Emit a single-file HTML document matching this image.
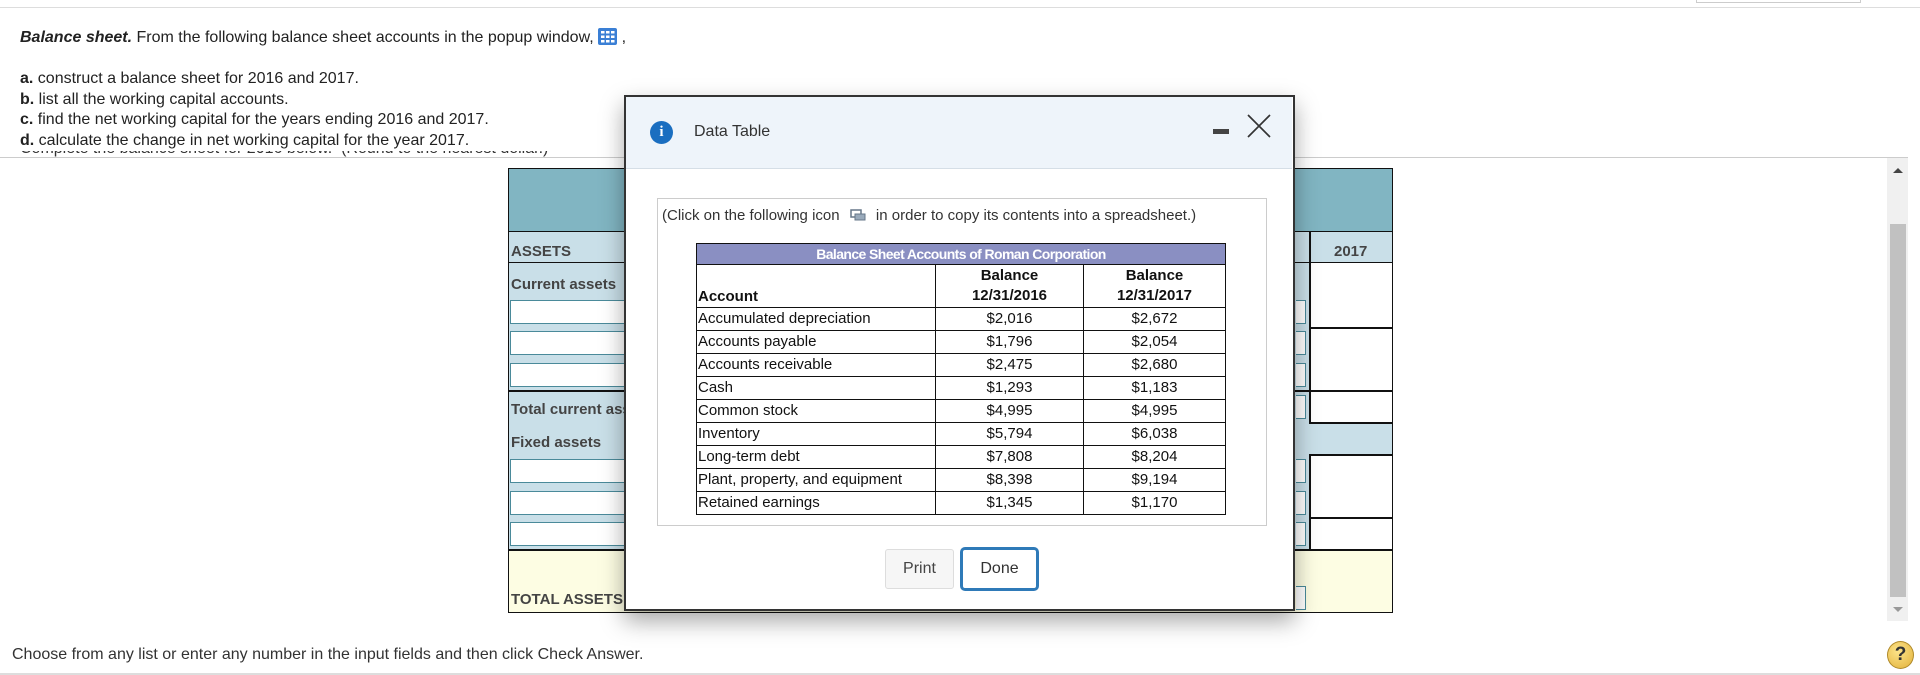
<!DOCTYPE html>
<html><head><meta charset="utf-8"><style>
*{box-sizing:border-box;margin:0;padding:0}
body{width:1920px;height:675px;position:relative;overflow:hidden;background:#fff;font-family:"Liberation Sans",Arial,sans-serif;color:#222}
.a{position:absolute}
.q{font-size:16px;line-height:20.5px;white-space:nowrap}
.lbl{font-weight:bold;color:#444;font-size:15px}
.inp{position:absolute;left:510px;width:130px;height:24px;border:1.5px solid #4a8a9a;background:#fff}
.rin{position:absolute;left:1296px;width:10px;height:24px;border:1.5px solid #4a8a9a;border-left:none;background:#fff}
.dt{border-collapse:collapse;font-size:15px;color:#111}
.dt td{border:1.5px solid #111;height:23px;padding:0 1px;line-height:20px}
.dt td.n{text-align:center}
</style></head><body>
<div class="a" style="left:0;top:7px;width:1920px;height:1px;background:#ddd"></div>
<div class="a" style="left:1696px;top:0;width:165px;height:3px;border:1px solid #ccc;border-top:none"></div>

<div class="a q" style="left:20px;top:28px"><b><i>Balance sheet.</i></b> From the following balance sheet accounts in the popup window,
<span style="display:inline-block;width:19px;height:17px;background:#3a7fd5;border-radius:2px;vertical-align:-3px;position:relative">
<svg width="19" height="17" style="position:absolute;left:0;top:0"><g fill="#fff"><rect x="3" y="3" width="3.5" height="2.5"/><rect x="8" y="3" width="3.5" height="2.5"/><rect x="13" y="3" width="3.5" height="2.5"/><rect x="3" y="7.5" width="3.5" height="2.5"/><rect x="8" y="7.5" width="3.5" height="2.5"/><rect x="13" y="7.5" width="3.5" height="2.5"/><rect x="3" y="12" width="3.5" height="2.5"/><rect x="8" y="12" width="3.5" height="2.5"/><rect x="13" y="12" width="3.5" height="2.5"/></g></svg></span> ,</div>
<div class="a q" style="left:20px;top:69px"><b>a.</b> construct a balance sheet for 2016 and 2017.<br><b>b.</b> list all the working capital accounts.<br><b>c.</b> find the net working capital for the years ending 2016 and 2017.<br><b>d.</b> calculate the change in net working capital for the year 2017.</div>
<div class="a" style="left:0;top:151px;width:640px;height:7px;overflow:hidden"><div class="q" style="position:absolute;left:20px;top:-12px;color:#333">Complete the balance sheet for 2016 below. &nbsp;(Round to the nearest dollar.)</div></div>
<div class="a" style="left:0;top:157px;width:1908px;height:1px;background:#ccc"></div>

<!-- background table -->
<div class="a" style="left:508px;top:168px;width:885px;height:445px;border:1.5px solid #111;background:#fff"></div>
<div class="a" style="left:509px;top:169px;width:883px;height:63px;background:#81b5c2;border-bottom:1.5px solid #111"></div>
<div class="a" style="left:509px;top:232px;width:883px;height:31px;background:#c9dfe8;border-bottom:1.5px solid #111"></div>
<div class="a lbl" style="left:511px;top:243px">ASSETS</div>
<div class="a" style="left:1309px;top:232px;width:1.5px;height:380px;background:#111"></div>
<div class="a lbl" style="left:1334px;top:243px;font-size:15px">2017</div>
<div class="a" style="left:509px;top:263px;width:800px;height:127px;background:#c9dfe8"></div>
<div class="a" style="left:509px;top:390px;width:800px;height:159px;background:#c9dfe8"></div>
<div class="a" style="left:509px;top:422px;width:883px;height:32px;background:#c9dfe8"></div>
<div class="a" style="left:509px;top:549px;width:883px;height:63px;background:#fdfde3"></div>
<div class="a" style="top:327px;height:1.5px;background:#111;left:1309px;width:84px"></div>
<div class="a" style="left:509px;top:390px;width:884px;height:1.5px;background:#111"></div>
<div class="a" style="left:1309px;top:422px;width:84px;height:1.5px;background:#111"></div>
<div class="a" style="left:1309px;top:454px;width:84px;height:1.5px;background:#111"></div>
<div class="a" style="left:1309px;top:517px;width:84px;height:1.5px;background:#111"></div>
<div class="a" style="left:509px;top:549px;width:884px;height:1.5px;background:#111"></div>
<div class="a lbl" style="left:511px;top:276px">Current assets</div>
<div class="a lbl" style="left:511px;top:401px">Total current assets</div>
<div class="a lbl" style="left:511px;top:434px">Fixed assets</div>
<div class="a lbl" style="left:511px;top:591px">TOTAL ASSETS</div>
<div class="inp" style="top:300px"></div><div class="inp" style="top:331px"></div><div class="inp" style="top:363px"></div>
<div class="inp" style="top:459px"></div><div class="inp" style="top:491px"></div><div class="inp" style="top:522px"></div>
<div class="rin" style="top:300px"></div><div class="rin" style="top:331px"></div><div class="rin" style="top:363px"></div><div class="rin" style="top:395px"></div>
<div class="rin" style="top:459px"></div><div class="rin" style="top:491px"></div><div class="rin" style="top:522px"></div><div class="rin" style="top:586px"></div>

<!-- dialog -->
<div class="a" style="left:624px;top:95px;width:671px;height:516px;background:#fff;border:2.5px solid #333;box-shadow:0 10px 22px rgba(0,0,0,.35)">
 <div class="a" style="left:0;top:0;width:666px;height:72px;background:#eef4fa;border-bottom:1px solid #d5dee6"></div>
 <div class="a" style="left:24px;top:24px;width:23px;height:23px;border-radius:50%;background:#1a6ec0;color:#fff;font:bold 15px 'Liberation Serif',serif;text-align:center;line-height:23px">i</div>
 <div class="a" style="left:68px;top:26px;font-size:16px;color:#333">Data Table</div>
 <div class="a" style="left:587px;top:32px;width:16px;height:5px;background:#444"></div>
 <svg class="a" style="left:620px;top:16px" width="26" height="26"><path d="M2 2 L24 24 M24 2 L2 24" stroke="#333" stroke-width="1.7" fill="none"/></svg>
 <div class="a" style="left:31px;top:101px;width:610px;height:328px;border:1px solid #ccc"></div>
 <div class="a" style="left:36px;top:110px;font-size:15px;color:#333;white-space:nowrap">(Click on the following icon <svg width="16" height="12" style="vertical-align:-1px;margin:0 6px"><rect x="1" y="1" width="10" height="7" fill="none" stroke="#678" stroke-width="1.5"/><rect x="5" y="5" width="10" height="6" fill="#9ab" stroke="#678"/></svg> in order to copy its contents into a spreadsheet.)</div>
 <table class="dt a" style="left:70px;top:146px;width:530px">
  <tr><td colspan="3" style="background:#8a8fc2;color:#fff;text-align:center;font-weight:bold;font-size:14px;letter-spacing:-0.6px;height:21px">Balance Sheet Accounts of Roman Corporation</td></tr>
  <tr><td style="width:239px;font-weight:bold;vertical-align:bottom">Account</td><td class="n" style="width:148px;font-weight:bold;height:43px">Balance<br>12/31/2016</td><td class="n" style="font-weight:bold">Balance<br>12/31/2017</td></tr>
  <tr><td>Accumulated depreciation</td><td class="n">$2,016</td><td class="n">$2,672</td></tr>
  <tr><td>Accounts payable</td><td class="n">$1,796</td><td class="n">$2,054</td></tr>
  <tr><td>Accounts receivable</td><td class="n">$2,475</td><td class="n">$2,680</td></tr>
  <tr><td>Cash</td><td class="n">$1,293</td><td class="n">$1,183</td></tr>
  <tr><td>Common stock</td><td class="n">$4,995</td><td class="n">$4,995</td></tr>
  <tr><td>Inventory</td><td class="n">$5,794</td><td class="n">$6,038</td></tr>
  <tr><td>Long-term debt</td><td class="n">$7,808</td><td class="n">$8,204</td></tr>
  <tr><td>Plant, property, and equipment</td><td class="n">$8,398</td><td class="n">$9,194</td></tr>
  <tr><td>Retained earnings</td><td class="n">$1,345</td><td class="n">$1,170</td></tr>
 </table>
 <div class="a" style="left:259px;top:452px;width:69px;height:40px;border:1px solid #ddd;background:#f6f6f6;border-radius:3px;font-size:16px;color:#444;text-align:center;line-height:38px">Print</div>
 <div class="a" style="left:334px;top:450px;width:79px;height:44px;border:3px solid #2f7ab8;border-radius:5px;background:#fff;font-size:16px;color:#333;text-align:center;line-height:38px">Done</div>
</div>

<!-- scrollbar -->
<div class="a" style="left:1887px;top:158px;width:21px;height:463px;background:#f0f0f0"></div>
<div class="a" style="left:1890px;top:224px;width:16px;height:373px;background:#c1c1c1"></div>
<div class="a" style="left:1893px;top:168px;width:0;height:0;border-left:5px solid transparent;border-right:5px solid transparent;border-bottom:5px solid #444"></div>
<div class="a" style="left:1893px;top:607px;width:0;height:0;border-left:5px solid transparent;border-right:5px solid transparent;border-top:5px solid #999"></div>

<div class="a q" style="left:12px;top:645px;color:#333">Choose from any list or enter any number in the input fields and then click Check Answer.</div>
<div class="a" style="left:1887px;top:641px;width:27px;height:28px;border-radius:50%;background:radial-gradient(circle at 40% 35%,#fde48a,#e2b13a);border:1px solid #b08a2a;font:bold 19px 'Liberation Sans',sans-serif;color:#333;text-align:center;line-height:26px">?</div>
<div class="a" style="left:0;top:673px;width:1920px;height:2px;background:#ddd"></div>
</body></html>
